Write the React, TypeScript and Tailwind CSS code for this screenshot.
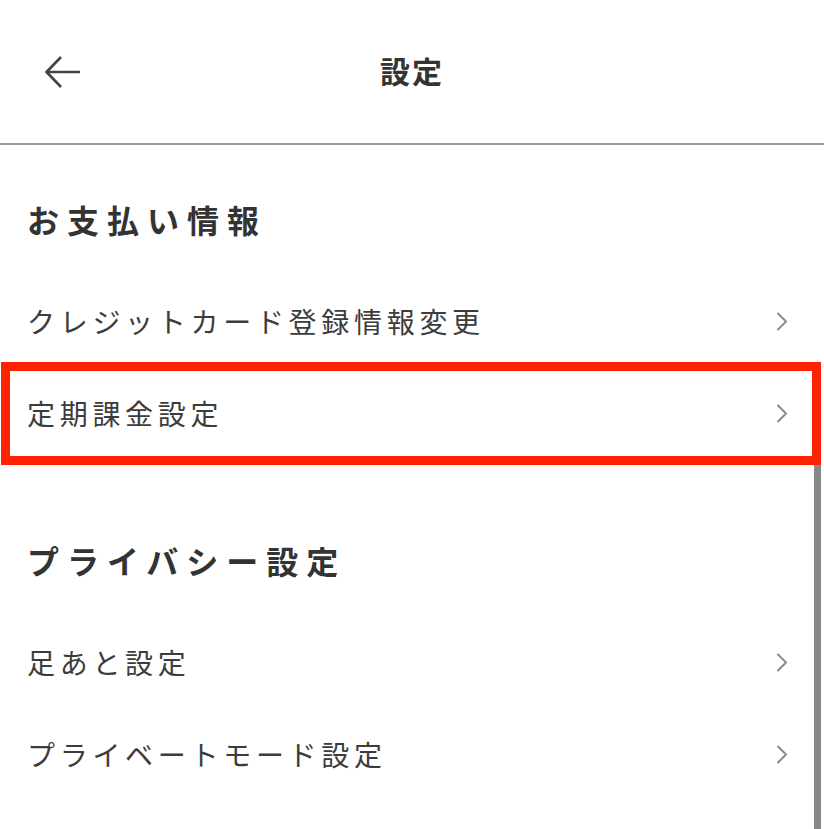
import React from "react";

type Section = {
  title: string;
  items: string[];
};

const sections: Section[] = [
  { title: "お支払い情報", items: ["クレジットカード登録情報変更", "定期課金設定"] },
  { title: "プライバシー設定", items: ["足あと設定", "プライベートモード設定"] },
];

function Chevron() {
  return (
    <svg width="12" height="19" viewBox="0 0 12 19" fill="none">
      <path d="M2 1.5L10 9.5L2 17.5" stroke="#8a8a8a" strokeWidth="2" strokeLinecap="round" strokeLinejoin="round" />
    </svg>
  );
}

function Row({ label, highlight }: { label: string; highlight?: boolean }) {
  return (
    <div className="relative h-[92px] flex items-center justify-between pl-[27px] pr-[36px]">
      <span className="text-[28px] tracking-[4.7px] text-[#3c3c3c] -mt-[1px]">{label}</span>
      <Chevron />
      {/* 注目枠 */}
      {highlight && (
        <div className="absolute left-[1px] right-[3px] -top-[5px] -bottom-[6px] border-[9px] border-[#ff2200] z-10" />
      )}
    </div>
  );
}

export default function App() {
  return (
    <div
      className="relative w-full h-[829px] overflow-hidden bg-white"
      style={{ fontFamily: '"Noto Sans CJK JP", "Noto Sans", sans-serif' }}
    >
      <header className="h-[143px] flex items-center px-[45px]">
        <button className="w-[36px] flex">
          <svg width="36" height="32" viewBox="0 0 36 32" fill="none">
            <path d="M35 16H2M16 1L1.5 16L16 31" stroke="#444" strokeWidth="2.6" strokeLinejoin="round" />
          </svg>
        </button>
        <h1 className="flex-1 text-center text-[30px] font-bold tracking-[2px] text-[#333] -mt-[3px]">設定</h1>
        <div className="w-[36px]" />
      </header>
      <div className="h-[2px] bg-[#999]" />

      {sections.map((s, i) => (
        <section key={s.title} className={i === 0 ? "pt-[42px]" : "pt-[69px]"}>
          <h2 className="h-[64px] flex items-center pl-[27px] text-[32px] font-bold tracking-[8px] text-[#333]">
            {s.title}
          </h2>
          <div className="mt-[24px]">
            {s.items.map((item) => (
              <Row key={item} label={item} highlight={item === "定期課金設定"} />
            ))}
          </div>
        </section>
      ))}

      {/* スクロールバー */}
      <div className="absolute right-[3px] top-[440px] bottom-0 w-[7px] bg-[#888]" />
    </div>
  );
}
